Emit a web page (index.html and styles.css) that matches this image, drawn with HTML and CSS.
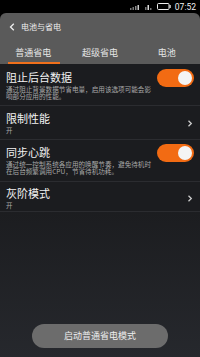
FILE: index.html
```html
<!DOCTYPE html>
<html lang="zh">
<head>
<meta charset="utf-8">
<link rel="stylesheet" href="styles.css">
</head>
<body>
<div class="screen">
  <div class="status">
    <svg class="sig" width="12" height="6" viewBox="0 0 12 6"><rect x="0" y="4" width="1.5" height="2" fill="#777"/><rect x="2.5" y="3" width="1.5" height="3" fill="#777"/><rect x="5" y="2" width="1.5" height="4" fill="#888"/><rect x="7.5" y="1" width="1.5" height="5" fill="#ccc"/></svg>
    <svg class="sig" width="7" height="6" viewBox="0 0 7 6"><rect x="0" y="3" width="1.5" height="3" fill="#777"/><rect x="2.5" y="1" width="1.5" height="5" fill="#ddd"/><rect x="5" y="4" width="1.5" height="2" fill="#777"/></svg>
    <svg class="bat" width="14" height="7" viewBox="0 0 14 7"><rect x="0.5" y="0.5" width="11.5" height="6" rx="1" fill="none" stroke="#eee" stroke-width="1"/><rect x="12.5" y="2" width="1.2" height="3" fill="#eee"/></svg>
    <span class="time">07:52</span>
  </div>
  <div class="header">
    <div class="titlebar">
      <svg class="back" width="6" height="8" viewBox="0 0 6 8"><path d="M4.8 0.8 L1.5 4 L4.8 7.2" fill="none" stroke="#eee" stroke-width="1.3"/></svg>
      <span class="title">电池与省电</span>
    </div>
    <div class="tabs">
      <div class="tab active">普通省电</div>
      <div class="tab">超级省电</div>
      <div class="tab">电池</div>
    </div>
  </div>
  <div class="list">
    <div class="row r1">
      <div class="text">
        <div class="name">阻止后台数据</div>
        <div class="desc">通过阻止背景数据节省电量，启用该选项可能会影响部分应用的性能。</div>
      </div>
      <div class="toggle"><div class="knob"></div></div>
    </div>
    <div class="row r2">
      <div class="text">
        <div class="name">限制性能</div>
        <div class="val">开</div>
      </div>
      <svg class="chev" width="6" height="7" viewBox="0 0 6 7"><path d="M1.5 0.8 L4.3 3.5 L1.5 6.2" fill="none" stroke="#ccc" stroke-width="1.3"/></svg>
    </div>
    <div class="row r3">
      <div class="text">
        <div class="name">同步心跳</div>
        <div class="desc">通过统一控制系统各应用的唤醒节奏，避免待机时在后台频繁调用CPU，节省待机功耗。</div>
      </div>
      <div class="toggle t2"><div class="knob"></div></div>
    </div>
    <div class="row r4">
      <div class="text">
        <div class="name">灰阶模式</div>
        <div class="val">开</div>
      </div>
      <svg class="chev" width="6" height="7" viewBox="0 0 6 7"><path d="M1.5 0.8 L4.3 3.5 L1.5 6.2" fill="none" stroke="#ccc" stroke-width="1.3"/></svg>
    </div>
  </div>
  <div class="bottom">
    <div class="btn">启动普通省电模式</div>
  </div>
</div>
</body>
</html>
```
FILE: styles.css
```css
* { box-sizing: border-box; margin: 0; padding: 0; }
html, body { width: 200px; height: 357px; overflow: hidden; background: #000; }
body { font-family: "Noto Sans CJK SC", "Noto Sans", sans-serif; color: #eee; }
.screen { width: 200px; height: 357px; display: flex; flex-direction: column; }
.status { height: 13px; background: #000; display: flex; align-items: center; justify-content: flex-end; padding-right: 4px; gap: 3px; }
.sig { display: block; }
.bat { display: block; margin-left: 2px; }
.time { font-family: "Roboto", "Liberation Sans", sans-serif; font-size: 8.5px; line-height: 10px; color: #f2f2f2; margin-left: 1px; }
.header { background: #5a5a5a; border-radius: 6px 6px 0 0; height: 51px; display: flex; flex-direction: column; }
.titlebar { height: 27px; display: flex; align-items: center; padding-left: 9px; padding-top: 1px; }
.back { display: block; }
.title { font-size: 8px; line-height: 10px; margin-left: 6px; color: #eee; }
.tabs { height: 24px; display: flex; }
.tab { flex: 1; text-align: center; font-size: 9px; line-height: 11px; padding-top: 7px; color: #e6e6e6; position: relative; }
.tab.active::after { content: ""; position: absolute; left: 8px; right: 7px; bottom: 0; height: 2px; background: #f0701c; }
.list { background: #1b1c1f; }
.row { display: flex; padding: 0 6px; border-bottom: 1px solid #2b2c30; }
.text { flex: 1; }
.name { font-size: 11px; line-height: 13px; color: #f2f2f2; }
.desc { font-size: 6.6px; line-height: 6.8px; color: #a8a8a8; margin-top: 2px; width: 148px; }
.val { font-size: 6.5px; line-height: 7px; color: #a8a8a8; margin-top: 2px; }
.r1 { height: 42px; padding-top: 7px; }
.r2 { height: 34px; padding-top: 6px; }
.r3 { height: 42px; padding-top: 6px; }
.r4 { height: 30px; padding-top: 5px; }
.toggle { width: 37px; height: 18px; border-radius: 9px; background: #f26b13; margin-top: -2px; margin-right: 0; position: relative; }
.t2 { margin-top: -2px; }
.knob { position: absolute; right: 2px; top: 2px; width: 14px; height: 14px; border-radius: 50%; background: #f4f4f4; }
.chev { display: block; margin-top: 8px; margin-right: 1px; }
.bottom { flex: 1; background: linear-gradient(#1c1d20, #26282d); display: flex; flex-direction: column; justify-content: flex-end; align-items: center; padding-bottom: 9px; }
.btn { width: 136px; height: 24px; border-radius: 12px; background: #6c6c6c; color: #eee; font-size: 9px; line-height: 24px; text-align: center; }
```
